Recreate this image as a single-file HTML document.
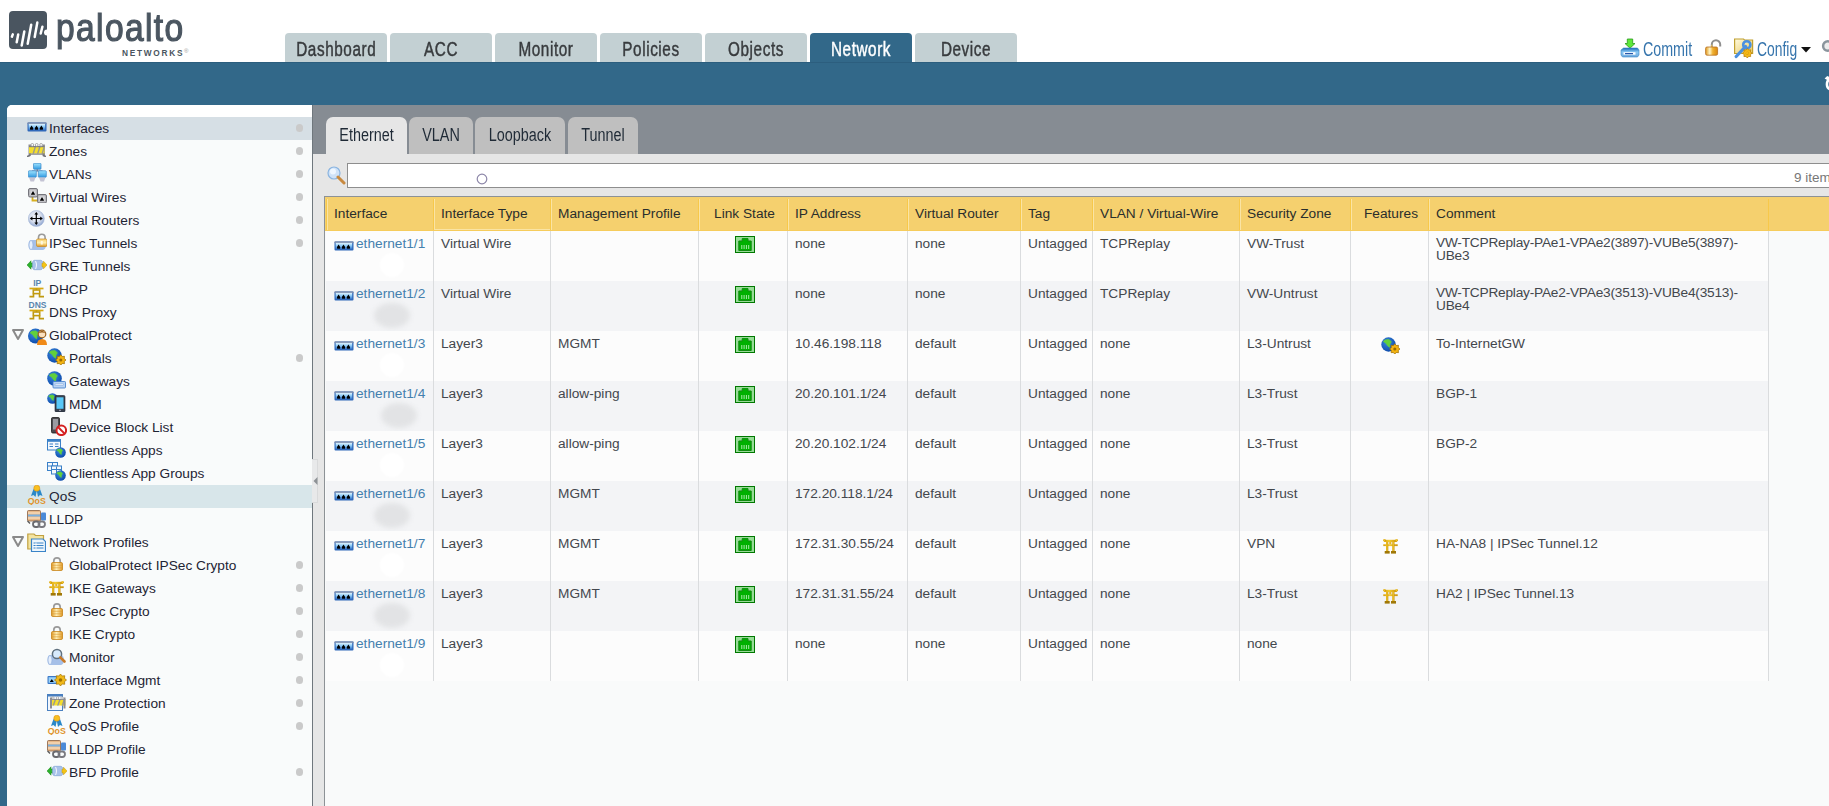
<!DOCTYPE html><html><head><meta charset="utf-8"><style>
*{box-sizing:border-box}
html,body{margin:0;padding:0}
body{width:1829px;height:806px;overflow:hidden;position:relative;background:#fff;font-family:"Liberation Sans", sans-serif;}
.a{position:absolute}
.tt{position:absolute;top:33px;width:102px;height:29px;background:#c3d0d3;border-radius:4px 4px 0 0;}
.tt span{position:absolute;left:0;right:0;top:5px;text-align:center;font-size:19.6px;color:#383b3e;transform:scaleX(0.78);white-space:nowrap;letter-spacing:0.75px;-webkit-text-stroke:0.45px currentColor}
.si{position:absolute;left:7px;width:305px;height:23px;}
.si .t{position:absolute;top:3px;font-size:13.7px;color:#1e2434;white-space:nowrap;line-height:17px}
.dot{position:absolute;left:295px;top:7px;width:9px;height:9px;border-radius:50%;background:#d5d8da}
.st{position:absolute;top:117px;height:37px;background:#bfbfbf;border-radius:7px 7px 0 0;}
.st span{position:absolute;left:0;right:0;top:8px;text-align:center;font-size:18px;color:#1f2a36;transform:scaleX(0.8);white-space:nowrap}
.hd{position:absolute;top:0;height:34px;}
.hd span{position:absolute;top:9px;font-size:13.7px;color:#2a2a2a;white-space:nowrap;line-height:17px}
.row{position:absolute;left:326px;width:1442px;height:50px;}
.c{position:absolute;top:5px;font-size:13.7px;color:#43474d;white-space:nowrap;line-height:17px}
.vl{position:absolute;top:231px;height:450px;width:1px;background:#dadcde}
</style></head><body>

<svg class="a" style="left:9px;top:11px" width="38" height="38" viewBox="0 0 38 38"><path d="M4 0 H34 A4 4 0 0 1 38 4 V18.5 A2.6 2.6 0 0 0 38 24.5 V34 A4 4 0 0 1 34 38 H4 A4 4 0 0 1 0 34 V4 A4 4 0 0 1 4 0Z" fill="#4a5560"/><g stroke="#fff" stroke-width="2.5" stroke-linecap="round"><path d="M2.9 25.7 L3.8 23.4"/><path d="M7.7 31.3 L9.2 23.5"/><path d="M12.7 34.5 L15.3 20.6"/><path d="M18.7 32.8 L22.2 13.8"/><path d="M25.7 26 L28.3 11.6"/><path d="M31.7 22.5 L33.4 15.7"/></g></svg>
<div class="a" style="left:56px;top:5px;font-size:39px;color:#4b5661;letter-spacing:1.6px;transform:scaleX(0.86);transform-origin:0 0;-webkit-text-stroke:1.2px #4b5661;line-height:46px">paloalto</div>
<div class="a" style="left:122px;top:48px;font-size:8.3px;font-weight:bold;color:#4a5560;letter-spacing:1.72px;line-height:10px">NETWORKS</div>
<div class="a" style="left:184px;top:48px;font-size:6px;color:#999;line-height:6px">&reg;</div>
<div class="tt" style="left:285px"><span>Dashboard</span></div>
<div class="tt" style="left:390px"><span>ACC</span></div>
<div class="tt" style="left:495px"><span>Monitor</span></div>
<div class="tt" style="left:600px"><span>Policies</span></div>
<div class="tt" style="left:705px"><span>Objects</span></div>
<div class="tt" style="left:810px;background:#326889"><span style="color:#fff">Network</span></div>
<div class="tt" style="left:915px"><span>Device</span></div>
<svg style="position:absolute;left:1620px;top:38px" width="20" height="20" viewBox="0 0 20 20"><defs><linearGradient id="cg1" x1="0" y1="0" x2="0" y2="1"><stop offset="0" stop-color="#1a6ab8"/><stop offset=".45" stop-color="#8ccaf5"/><stop offset="1" stop-color="#6aa6dc"/></linearGradient></defs><path d="M7.3 1 H12.7 V5.5 H15 L10 10.2 L5 5.5 H7.3Z" fill="#5ee83a" stroke="#2a9a1a" stroke-width=".8"/><path d="M3.5 10 H17.5 L19 12 V17 L17.5 19 H2.5 L1 17 V12Z" fill="url(#cg1)" stroke="#3a88c8" stroke-width=".6"/><rect x="3.5" y="14.2" width="12" height="2.5" fill="#fafcff"/><rect x="5" y="15" width="8" height="1.2" fill="#2a58a8"/></svg>
<div class="a" style="left:1643px;top:40px;font-size:19.3px;color:#3574ac;transform:scaleX(0.74);transform-origin:0 0;line-height:20px;white-space:nowrap">Commit</div>
<svg style="position:absolute;left:1705px;top:39px" width="17" height="17" viewBox="0 0 17 17"><defs><linearGradient id="lg1" x1="0" y1="0" x2="1" y2="0"><stop offset="0" stop-color="#e0961a"/><stop offset=".35" stop-color="#fff6c8"/><stop offset=".6" stop-color="#f0b030"/><stop offset="1" stop-color="#d88810"/></linearGradient></defs><path d="M6.8 8 V5.5 A4.2 4.2 0 0 1 15.2 5.5 V7.5" stroke="#8e8e8e" stroke-width="2" fill="none"/><path d="M6.8 8 V5.8" stroke="#e8c060" stroke-width="1.2"/><rect x="0.6" y="8" width="12" height="8.2" rx="1.4" fill="url(#lg1)" stroke="#b87020" stroke-width=".8"/></svg>
<svg style="position:absolute;left:1734px;top:38px" width="20" height="21" viewBox="0 0 20 21"><defs><linearGradient id="fg1" x1="0" y1="0" x2="1" y2="1"><stop offset="0" stop-color="#fffbe0"/><stop offset="1" stop-color="#e8c860"/></linearGradient></defs><path d="M0.6 1 H9.5 L10.5 2 H18.6 V15.5 H0.6Z" fill="url(#fg1)" stroke="#c0a030" stroke-width="1.2"/><path d="M2.2 18.5 L11.5 8.5" stroke="#4a90e0" stroke-width="3.2" stroke-linecap="round"/><circle cx="12.8" cy="6.8" r="3.6" fill="none" stroke="#4a90e0" stroke-width="2.6"/><polygon points="18.10,15.20 16.49,16.52 16.69,18.59 14.62,18.39 13.30,20.00 11.98,18.39 9.91,18.59 10.11,16.52 8.50,15.20 10.11,13.88 9.91,11.81 11.98,12.01 13.30,10.40 14.62,12.01 16.69,11.81 16.49,13.88" fill="#f4b818" stroke="#b07a08" stroke-width=".7"/><circle cx="13.3" cy="15.2" r="1.44" fill="#b07a08"/><circle cx="13.3" cy="15.2" r="1.4" fill="#f4b818"/></svg>
<div class="a" style="left:1757px;top:40px;font-size:19.3px;color:#3574ac;transform:scaleX(0.72);transform-origin:0 0;line-height:20px;white-space:nowrap">Config</div>
<svg style="position:absolute;left:1801px;top:47px" width="10" height="6" viewBox="0 0 10 6"><path d="M0 0 H10 L5 5.5Z" fill="#111"/></svg>
<svg style="position:absolute;left:1820px;top:39px" width="14" height="14" viewBox="0 0 14 14"><circle cx="7.8" cy="7" r="4.7" fill="#ececec" stroke="#8a959d" stroke-width="2.5"/></svg>
<div class="a" style="left:0;top:62px;width:1829px;height:43px;background:#326889;border-top:1px solid #2c5e7e"></div>
<svg style="position:absolute;left:1822px;top:74px" width="8" height="19" viewBox="0 0 8 19"><path d="M8.5 4.8 A5.6 5.8 0 0 0 8.5 15.6" stroke="#fff" stroke-width="2.6" fill="none"/><path d="M2.6 4.6 L5.2 2 L8 3 L6 6.5Z" fill="#fff"/></svg>
<div class="a" style="left:0;top:105px;width:7px;height:701px;background:#326889"></div>
<div class="a" style="left:0;top:104px;width:20px;height:10px;background:#326889"></div>
<div class="a" style="left:313px;top:105px;width:1516px;height:701px;background:#868c93"></div>
<div class="a" style="left:313px;top:154px;width:1516px;height:652px;background:#e6e6e6"></div>
<div class="a" style="left:7px;top:105px;width:305px;height:701px;background:#f9fbfb;border-top-left-radius:5px"></div>
<div class="a" style="left:312px;top:105px;width:1px;height:701px;background:#6f777d"></div>
<div class="a" style="left:7px;top:105px;width:305px;height:12px;background:#fff;border-top-left-radius:5px"></div>
<div class="si" style="top:117px;background:#d6dfe5;"></div>
<div class="a" style="left:49px;top:120px;font-size:13.7px;color:#1e2434;white-space:nowrap;line-height:17px">Interfaces</div>
<svg style="position:absolute;left:27px;top:122px" width="20" height="10" viewBox="0 0 20 10"><defs><linearGradient id="g1" x1="0" y1="0" x2="0" y2="1"><stop offset="0" stop-color="#e6f6ff"/><stop offset=".45" stop-color="#8ccaf5"/><stop offset="1" stop-color="#2f6fc8"/></linearGradient></defs><rect x="0.5" y="0.5" width="19" height="9" rx="1" fill="#3068b8"/><rect x="0.5" y="0.5" width="19" height="1.4" fill="#7c8aa8"/><rect x="1.6" y="1.8" width="16.6" height="6.4" fill="url(#g1)"/><path d="M2.8999999999999995 7 C2.8999999999999995 5.6 3.8 5 4.6 3.6 C5.3999999999999995 5 6.3 5.6 6.3 7Z" fill="#000"/><rect x="3.0999999999999996" y="6.5" width="3" height="1.2" fill="#000"/><path d="M7.8 7 C7.8 5.6 8.7 5 9.5 3.6 C10.3 5 11.2 5.6 11.2 7Z" fill="#000"/><rect x="8.0" y="6.5" width="3" height="1.2" fill="#000"/><path d="M12.700000000000001 7 C12.700000000000001 5.6 13.6 5 14.4 3.6 C15.200000000000001 5 16.1 5.6 16.1 7Z" fill="#000"/><rect x="12.9" y="6.5" width="3" height="1.2" fill="#000"/></svg>
<div class="a" style="left:296px;top:124px;width:7px;height:8px;border-radius:3.5px;background:#cacaca"></div>
<div class="si" style="top:140px;"></div>
<div class="a" style="left:49px;top:143px;font-size:13.7px;color:#1e2434;white-space:nowrap;line-height:17px">Zones</div>
<svg style="position:absolute;left:27px;top:143px" width="19" height="14" viewBox="0 0 19 14"><rect x="1.5" y="1.5" width="2.4" height="11.5" fill="#8d8d92"/><rect x="15.5" y="1.5" width="2.4" height="11.5" fill="#8d8d92"/><rect x="2" y="4" width="15.5" height="6.5" fill="#f4de2c"/><path d="M5.5 10.5 L7.5 4 H9 L7 10.5Z M10 10.5 L12 4 H13.5 L11.5 10.5Z M14.5 10.5 L16.5 4 H17.5 V5.5 L16 10.5Z" fill="#9a9a90"/><rect x="2" y="10.5" width="15.5" height="1.2" fill="#7c7c80"/><rect x="2" y="3" width="15.5" height="1.2" fill="#7c7c80"/><circle cx="5.3" cy="1.9" r="1.4" fill="#fff" stroke="#888" stroke-width=".7"/><circle cx="9.7" cy="1.9" r="1.4" fill="#fff" stroke="#888" stroke-width=".7"/><circle cx="14.1" cy="1.9" r="1.4" fill="#fff" stroke="#888" stroke-width=".7"/><path d="M0 13.5 L3 12.5 M19 13.5 L16 12.5" stroke="#6f6f74" stroke-width="1.6"/></svg>
<div class="a" style="left:296px;top:147px;width:7px;height:8px;border-radius:3.5px;background:#cacaca"></div>
<div class="si" style="top:163px;"></div>
<div class="a" style="left:49px;top:166px;font-size:13.7px;color:#1e2434;white-space:nowrap;line-height:17px">VLANs</div>
<svg style="position:absolute;left:28px;top:163px" width="19" height="19" viewBox="0 0 19 19"><defs><linearGradient id="g2" x1="0" y1="0" x2="0" y2="1"><stop offset="0" stop-color="#9fe4ff"/><stop offset="1" stop-color="#2f98e0"/></linearGradient></defs><rect x="5.5" y="0.3" width="7.5" height="6" rx=".8" fill="url(#g2)" stroke="#3a88c8" stroke-width=".7"/><path d="M9.2 6.3 V8 M4 8 H14.5 M4 8 V8.5 M14.5 8 V8.5" stroke="#4a6a90" stroke-width="1"/><rect x="0.3" y="7.8" width="8" height="6.5" rx=".8" fill="url(#g2)" stroke="#3a88c8" stroke-width=".7"/><rect x="10.3" y="7.8" width="8" height="6.5" rx=".8" fill="url(#g2)" stroke="#3a88c8" stroke-width=".7"/><path d="M1 14.5 H7.5 L6 18.5 H2.5Z M11 14.5 H17.5 L16 18.5 H12.5Z" fill="#c4c4d4"/></svg>
<div class="a" style="left:296px;top:170px;width:7px;height:8px;border-radius:3.5px;background:#cacaca"></div>
<div class="si" style="top:186px;"></div>
<div class="a" style="left:49px;top:189px;font-size:13.7px;color:#1e2434;white-space:nowrap;line-height:17px">Virtual Wires</div>
<svg style="position:absolute;left:28px;top:188px" width="19" height="15" viewBox="0 0 19 15"><path d="M4.5 9 V12.5 H10" stroke="#d8b020" stroke-width="1.8" fill="none"/><rect x="0.5" y="0.5" width="9" height="8.5" rx="1.5" fill="#b8b8bc" stroke="#6a6a70" stroke-width=".9"/><rect x="2.3" y="2.3" width="5.4" height="5" fill="#d8d8dc"/><path d="M3 6.8 C3 5.5 4 5 5 3 C6 5 7 5.5 7 6.8Z" fill="#000"/><rect x="9.5" y="6.5" width="9" height="8.5" rx="1.5" fill="#b8b8bc" stroke="#6a6a70" stroke-width=".9"/><rect x="11.3" y="8.3" width="5.4" height="5" fill="#d8d8dc"/><path d="M12 12.8 C12 11.5 13 11 14 9 C15 11 16 11.5 16 12.8Z" fill="#000"/></svg>
<div class="a" style="left:296px;top:193px;width:7px;height:8px;border-radius:3.5px;background:#cacaca"></div>
<div class="si" style="top:209px;"></div>
<div class="a" style="left:49px;top:212px;font-size:13.7px;color:#1e2434;white-space:nowrap;line-height:17px">Virtual Routers</div>
<svg style="position:absolute;left:28px;top:210px" width="17" height="17" viewBox="0 0 17 17"><defs><radialGradient id="g3" cx=".45" cy=".4" r=".6"><stop offset="0" stop-color="#f4f6fa"/><stop offset=".6" stop-color="#d4dcec"/><stop offset="1" stop-color="#8fa6d0"/></radialGradient></defs><circle cx="8.3" cy="8.5" r="8" fill="url(#g3)" stroke="#a8b8d8" stroke-width=".6"/><path d="M8.3 3.5 V13.5 M3.3 8.5 H13.3" stroke="#000" stroke-width="1.2"/><path d="M8.3 2 L6.4 4.6 H10.2Z M8.3 15 L6.4 12.4 H10.2Z M1.8 8.5 L4.4 6.6 V10.4Z M14.8 8.5 L12.2 6.6 V10.4Z" fill="#000"/></svg>
<div class="a" style="left:296px;top:216px;width:7px;height:8px;border-radius:3.5px;background:#cacaca"></div>
<div class="si" style="top:232px;"></div>
<div class="a" style="left:49px;top:235px;font-size:13.7px;color:#1e2434;white-space:nowrap;line-height:17px">IPSec Tunnels</div>
<svg style="position:absolute;left:28px;top:233px" width="19" height="18" viewBox="0 0 19 18"><defs><linearGradient id="g4" x1="0" y1="0" x2="0" y2="1"><stop offset="0" stop-color="#f8d070"/><stop offset=".5" stop-color="#fff0b0"/><stop offset="1" stop-color="#e09820"/></linearGradient></defs><path d="M3 7 H15 A3 5 0 0 1 15 17 H3 A2.5 5 0 0 1 3 7Z" fill="#a6c0e8"/><ellipse cx="3" cy="12" rx="2" ry="4.5" fill="#e4eefc" stroke="#8aa8d8" stroke-width=".6"/><path d="M10.5 7 V4.5 A3.3 3.3 0 0 1 17.1 4.5 V7" stroke="#9a9a9a" stroke-width="1.6" fill="none"/><rect x="8.5" y="6" width="10.5" height="7.5" rx="1.2" fill="url(#g4)" stroke="#c88a20" stroke-width=".7"/><rect x="12.8" y="8" width="2" height="3.5" fill="#fff8e0"/></svg>
<div class="a" style="left:296px;top:239px;width:7px;height:8px;border-radius:3.5px;background:#cacaca"></div>
<div class="si" style="top:255px;"></div>
<div class="a" style="left:49px;top:258px;font-size:13.7px;color:#1e2434;white-space:nowrap;line-height:17px">GRE Tunnels</div>
<svg style="position:absolute;left:27px;top:259px" width="20" height="12" viewBox="0 0 20 12"><path d="M0 6 L4 1.8 V4 H6.5 V8 H4 V10.2Z" fill="#2cb02c" stroke="#1a8a1a" stroke-width=".5"/><path d="M7.5 1.3 H13.5 A2.6 4.7 0 0 1 13.5 10.7 H7.5 A2.2 4.7 0 0 1 7.5 1.3Z" fill="#a8c2ea" stroke="#7a9ed0" stroke-width=".6"/><path d="M8.5 2 Q10.5 6 8.5 10" stroke="#eef4fc" stroke-width="1.1" fill="none"/><path d="M15 4.2 H16.5 V2.2 L20 6 L16.5 9.8 V7.8 H15Z" fill="#f4c414" stroke="#c89a00" stroke-width=".5"/></svg>
<div class="si" style="top:278px;"></div>
<div class="a" style="left:49px;top:281px;font-size:13.7px;color:#1e2434;white-space:nowrap;line-height:17px">DHCP</div>
<svg style="position:absolute;left:28px;top:279px" width="19" height="19" viewBox="0 0 19 19"><text x="9.3" y="7" font-family="Liberation Sans" font-weight="bold" font-size="8.6" fill="#5a86ae" text-anchor="middle">IP</text><path d="M1.5 9.5 H15.5" stroke="#d8aa10" stroke-width="1.7"/><rect x="5.3" y="11" width="6.4" height="3.6" fill="none" stroke="#c09a10" stroke-width="1.6"/><path d="M8.5 9.5 V11 M5.5 14.5 V17.5 M11.5 14.5 V17.5 M1.5 17.6 H6.3 M10.7 17.6 H16" stroke="#c09a10" stroke-width="1.6" fill="none"/></svg>
<div class="si" style="top:301px;"></div>
<div class="a" style="left:49px;top:304px;font-size:13.7px;color:#1e2434;white-space:nowrap;line-height:17px">DNS Proxy</div>
<svg style="position:absolute;left:28px;top:301px" width="19" height="19" viewBox="0 0 19 19"><text x="9.5" y="7.4" font-family="Liberation Sans" font-weight="bold" font-size="8.4" fill="#5a86ae" text-anchor="middle" textLength="18" lengthAdjust="spacingAndGlyphs">DNS</text><path d="M1.5 9.5 H15.5" stroke="#d8aa10" stroke-width="1.7"/><rect x="5.3" y="11" width="6.4" height="3.6" fill="none" stroke="#c09a10" stroke-width="1.6"/><path d="M8.5 9.5 V11 M5.5 14.5 V17.5 M11.5 14.5 V17.5 M1.5 17.6 H6.3 M10.7 17.6 H16" stroke="#c09a10" stroke-width="1.6" fill="none"/></svg>
<div class="si" style="top:324px;"></div>
<div class="a" style="left:49px;top:327px;font-size:13.7px;color:#1e2434;white-space:nowrap;line-height:17px">GlobalProtect</div>
<svg style="position:absolute;left:28px;top:326px" width="19" height="19" viewBox="0 0 19 19"><defs><radialGradient id="g5" cx=".4" cy=".35" r=".7"><stop offset="0" stop-color="#3a88e0"/><stop offset="1" stop-color="#0a48a8"/></radialGradient></defs><circle cx="7.5" cy="10" r="7.5" fill="url(#g5)"/><path d="M3.75 5.35 L7.88 4.90 L10.50 7.15 L9.00 9.40 L8.62 12.85 L6.60 11.35 L4.88 8.65 L2.10 6.85Z" fill="#62d03a" stroke="#62d03a" stroke-width="0.75" stroke-linejoin="round"/><path d="M9 19 Q9 13 14 13 Q19 13 19 19Z" fill="#f08a18"/><circle cx="14" cy="8" r="3.8" fill="#fbe0c0" stroke="#9a6020" stroke-width="1.2"/><path d="M10.3 7.5 Q14 2 17.7 7.5 Q14 5.5 10.3 7.5Z" fill="#9a6020"/></svg>
<svg style="position:absolute;left:12px;top:329px" width="12" height="11" viewBox="0 0 12 11"><path d="M1 1 H11 L6 10Z" fill="none" stroke="#8a8a8a" stroke-width="2" stroke-linejoin="round"/></svg>
<div class="si" style="top:347px;"></div>
<div class="a" style="left:69px;top:350px;font-size:13.7px;color:#1e2434;white-space:nowrap;line-height:17px">Portals</div>
<svg style="position:absolute;left:47px;top:348px" width="19" height="17" viewBox="0 0 19 17"><defs><radialGradient id="g6" cx=".4" cy=".35" r=".7"><stop offset="0" stop-color="#3a88e0"/><stop offset="1" stop-color="#0a48a8"/></radialGradient></defs><circle cx="7.5" cy="7.5" r="7.2" fill="url(#g6)"/><path d="M3.90 3.04 L7.86 2.60 L10.38 4.76 L8.94 6.92 L8.58 10.24 L6.64 8.80 L4.98 6.20 L2.32 4.48Z" fill="#62d03a" stroke="#62d03a" stroke-width="0.72" stroke-linejoin="round"/><polygon points="19.00,12.00 17.26,13.43 17.48,15.68 15.23,15.46 13.80,17.20 12.37,15.46 10.12,15.68 10.34,13.43 8.60,12.00 10.34,10.57 10.12,8.32 12.37,8.54 13.80,6.80 15.23,8.54 17.48,8.32 17.26,10.57" fill="#f4b410" stroke="#9a6a00" stroke-width=".7"/><circle cx="13.8" cy="12" r="1.56" fill="#9a6a00"/></svg>
<div class="a" style="left:296px;top:354px;width:7px;height:8px;border-radius:3.5px;background:#cacaca"></div>
<div class="si" style="top:370px;"></div>
<div class="a" style="left:69px;top:373px;font-size:13.7px;color:#1e2434;white-space:nowrap;line-height:17px">Gateways</div>
<svg style="position:absolute;left:47px;top:371px" width="19" height="18" viewBox="0 0 19 18"><defs><radialGradient id="g7" cx=".4" cy=".35" r=".7"><stop offset="0" stop-color="#3a88e0"/><stop offset="1" stop-color="#0a48a8"/></radialGradient></defs><circle cx="7.5" cy="7.5" r="7.3" fill="url(#g7)"/><path d="M3.85 2.97 L7.87 2.54 L10.42 4.73 L8.96 6.92 L8.60 10.27 L6.62 8.81 L4.95 6.19 L2.24 4.43Z" fill="#62d03a" stroke="#62d03a" stroke-width="0.73" stroke-linejoin="round"/><rect x="6" y="10.5" width="12.5" height="6.5" rx=".8" fill="#b8d4f4" stroke="#3a78c8" stroke-width=".8"/><rect x="8" y="13" width="8.5" height="1.6" fill="#fff" stroke="#6a98d8" stroke-width=".5"/></svg>
<div class="si" style="top:393px;"></div>
<div class="a" style="left:69px;top:396px;font-size:13.7px;color:#1e2434;white-space:nowrap;line-height:17px">MDM</div>
<svg style="position:absolute;left:47px;top:393px" width="19" height="19" viewBox="0 0 19 19"><defs><radialGradient id="g8" cx=".4" cy=".35" r=".7"><stop offset="0" stop-color="#3a88e0"/><stop offset="1" stop-color="#0a48a8"/></radialGradient></defs><circle cx="5.5" cy="5.5" r="5.3" fill="url(#g8)"/><path d="M2.85 2.21 L5.76 1.90 L7.62 3.49 L6.56 5.08 L6.29 7.51 L4.86 6.45 L3.65 4.55 L1.68 3.27Z" fill="#62d03a" stroke="#62d03a" stroke-width="0.53" stroke-linejoin="round"/><rect x="8" y="2.5" width="10" height="16.5" rx="1.3" fill="#38404c" stroke="#1a2030" stroke-width=".6"/><rect x="9.5" y="4.3" width="7" height="11.5" fill="#58c8f8"/><rect x="12" y="16.8" width="2" height="1" fill="#aab"/></svg>
<div class="si" style="top:416px;"></div>
<div class="a" style="left:69px;top:419px;font-size:13.7px;color:#1e2434;white-space:nowrap;line-height:17px">Device Block List</div>
<svg style="position:absolute;left:48px;top:417px" width="19" height="19" viewBox="0 0 19 19"><rect x="3.5" y="0.5" width="8" height="15.5" rx="1.3" fill="#4a4a4e" stroke="#1a1a1a" stroke-width=".8"/><rect x="5" y="2" width="5" height="10.5" fill="#9a9aa0"/><circle cx="13.3" cy="13.3" r="4.8" fill="#fff" stroke="#d42020" stroke-width="2"/><path d="M10 10 L16.6 16.6" stroke="#d42020" stroke-width="2"/></svg>
<div class="si" style="top:439px;"></div>
<div class="a" style="left:69px;top:442px;font-size:13.7px;color:#1e2434;white-space:nowrap;line-height:17px">Clientless Apps</div>
<svg style="position:absolute;left:47px;top:439px" width="19" height="19" viewBox="0 0 19 19"><rect x="0.5" y="0.5" width="13" height="10.5" fill="#f4f8fc" stroke="#3a80c8" stroke-width="1"/><rect x="0.5" y="0.5" width="13" height="2.3" fill="#3a80c8"/><path d="M2.5 5 H6 M8 5 H11.5 M2.5 7.5 H6 M8 7.5 H11.5" stroke="#3a80c8" stroke-width="1.2"/><defs><radialGradient id="g9" cx=".4" cy=".35" r=".7"><stop offset="0" stop-color="#3a88e0"/><stop offset="1" stop-color="#0a48a8"/></radialGradient></defs><circle cx="13.5" cy="13.5" r="5.3" fill="url(#g9)"/><path d="M10.85 10.21 L13.77 9.90 L15.62 11.49 L14.56 13.08 L14.29 15.51 L12.86 14.45 L11.64 12.55 L9.68 11.27Z" fill="#62d03a" stroke="#62d03a" stroke-width="0.53" stroke-linejoin="round"/></svg>
<div class="si" style="top:462px;"></div>
<div class="a" style="left:69px;top:465px;font-size:13.7px;color:#1e2434;white-space:nowrap;line-height:17px">Clientless App Groups</div>
<svg style="position:absolute;left:47px;top:462px" width="19" height="19" viewBox="0 0 19 19"><rect x="0.5" y="0.5" width="10" height="8" fill="#f4f8fc" stroke="#3a80c8" stroke-width="1"/><path d="M1 4 H10 M5.5 1 V8" stroke="#3a80c8" stroke-width="1"/><rect x="4.5" y="4" width="10" height="8" fill="#f4f8fc" stroke="#3a80c8" stroke-width="1"/><path d="M5 7.5 H14 M9.5 4.5 V12" stroke="#3a80c8" stroke-width="1"/><defs><radialGradient id="g10" cx=".4" cy=".35" r=".7"><stop offset="0" stop-color="#3a88e0"/><stop offset="1" stop-color="#0a48a8"/></radialGradient></defs><circle cx="13.5" cy="13.5" r="5.3" fill="url(#g10)"/><path d="M10.85 10.21 L13.77 9.90 L15.62 11.49 L14.56 13.08 L14.29 15.51 L12.86 14.45 L11.64 12.55 L9.68 11.27Z" fill="#62d03a" stroke="#62d03a" stroke-width="0.53" stroke-linejoin="round"/></svg>
<div class="si" style="top:485px;background:#d8e6ea;"></div>
<div class="a" style="left:49px;top:488px;font-size:13.7px;color:#1e2434;white-space:nowrap;line-height:17px">QoS</div>
<svg style="position:absolute;left:27px;top:485px" width="20" height="20" viewBox="0 0 20 20"><path d="M6.5 4 L4 11 L6.5 10 L8.5 12 L9.8 6Z M13 4 L15.5 11 L13 10 L11 12 L9.8 6Z" fill="#2a88c8"/><circle cx="9.8" cy="3.2" r="3" fill="#f8c020" stroke="#e09010" stroke-width=".6"/><text x="9.8" y="19.3" font-family="Liberation Sans" font-weight="bold" font-size="8.2" fill="#e0942a" text-anchor="middle" textLength="18" lengthAdjust="spacingAndGlyphs">QoS</text></svg>
<div class="si" style="top:508px;"></div>
<div class="a" style="left:49px;top:511px;font-size:13.7px;color:#1e2434;white-space:nowrap;line-height:17px">LLDP</div>
<svg style="position:absolute;left:27px;top:510px" width="20" height="18" viewBox="0 0 20 18"><rect x="0.5" y="0.5" width="13" height="10.5" rx="1" fill="#e8b888" stroke="#8a6040" stroke-width=".8"/><path d="M1 3 H13 M1 8 H13" stroke="#fbe8d0" stroke-width="1"/><rect x="1" y="4.5" width="12" height="2" fill="#7ab0e0"/><path d="M0.5 11 L3 13.5" stroke="#555" stroke-width="1.2"/><rect x="14" y="2.5" width="5" height="8" rx="1" fill="#4a8ad8"/><rect x="6" y="11.5" width="6.5" height="5.5" rx="2.7" fill="none" stroke="#6a6a6e" stroke-width="1.8"/><rect x="11.5" y="11.5" width="6.5" height="5.5" rx="2.7" fill="none" stroke="#7a7a80" stroke-width="1.8"/></svg>
<div class="si" style="top:531px;"></div>
<div class="a" style="left:49px;top:534px;font-size:13.7px;color:#1e2434;white-space:nowrap;line-height:17px">Network Profiles</div>
<svg style="position:absolute;left:27px;top:533px" width="19" height="19" viewBox="0 0 19 19"><path d="M0.8 1 H7 L8.5 2.5 H16.5 V16 H0.8Z" fill="#f4e4a0" stroke="#c0a040" stroke-width="1.2"/><path d="M4.5 6 H16 L18.5 8.5 V18.5 H4.5Z" fill="#eef6fc" stroke="#3a84c8" stroke-width="1.2"/><path d="M6.5 10 H16.5 M6.5 12.5 H16.5 M6.5 15 H16.5" stroke="#3a84c8" stroke-width="1"/><path d="M9 9.5 V16" stroke="#fff" stroke-width=".8"/></svg>
<svg style="position:absolute;left:12px;top:536px" width="12" height="11" viewBox="0 0 12 11"><path d="M1 1 H11 L6 10Z" fill="none" stroke="#8a8a8a" stroke-width="2" stroke-linejoin="round"/></svg>
<div class="si" style="top:554px;"></div>
<div class="a" style="left:69px;top:557px;font-size:13.7px;color:#1e2434;white-space:nowrap;line-height:17px">GlobalProtect IPSec Crypto</div>
<svg style="position:absolute;left:51px;top:556px" width="12" height="15" viewBox="0 0 12 15"><defs><linearGradient id="g11" x1="0" y1="0" x2="1" y2="0"><stop offset="0" stop-color="#e09a28"/><stop offset=".45" stop-color="#fff0b8"/><stop offset="1" stop-color="#e09a28"/></linearGradient></defs><path d="M2.8 7 V5 A3.2 3.2 0 0 1 9.2 5 V7" stroke="#9a9a9a" stroke-width="1.7" fill="none"/><rect x="0.5" y="6.5" width="11" height="8" rx="1.3" fill="url(#g11)" stroke="#c88418" stroke-width=".8"/><path d="M1 9.3 H11 M1 11.8 H11" stroke="#d89a30" stroke-width=".6"/></svg>
<div class="a" style="left:296px;top:561px;width:7px;height:8px;border-radius:3.5px;background:#cacaca"></div>
<div class="si" style="top:577px;"></div>
<div class="a" style="left:69px;top:580px;font-size:13.7px;color:#1e2434;white-space:nowrap;line-height:17px">IKE Gateways</div>
<svg style="position:absolute;left:49px;top:581px" width="15" height="15" viewBox="0 0 15 15"><defs><linearGradient id="g12" x1="0" y1="0" x2="1" y2="0"><stop offset="0" stop-color="#d8a010"/><stop offset=".4" stop-color="#f4cc30"/><stop offset="1" stop-color="#c89008"/></linearGradient></defs><g fill="url(#g12)"><rect x="1" y="0.8" width="13" height="2.2"/><circle cx="1.4" cy="1.3" r="1.3"/><circle cx="13.6" cy="1.3" r="1.3"/><rect x="0.3" y="5.3" width="14.4" height="1.8"/><rect x="3" y="2.8" width="2.3" height="9.5"/><rect x="9.2" y="2.8" width="2.3" height="9.5"/><rect x="6.3" y="2.8" width="2" height="2.6"/></g><rect x="1.7" y="12" width="5" height="2.6" fill="#a07808"/><rect x="8" y="12" width="5" height="2.6" fill="#a07808"/></svg>
<div class="a" style="left:296px;top:584px;width:7px;height:8px;border-radius:3.5px;background:#cacaca"></div>
<div class="si" style="top:600px;"></div>
<div class="a" style="left:69px;top:603px;font-size:13.7px;color:#1e2434;white-space:nowrap;line-height:17px">IPSec Crypto</div>
<svg style="position:absolute;left:51px;top:602px" width="12" height="15" viewBox="0 0 12 15"><defs><linearGradient id="g13" x1="0" y1="0" x2="1" y2="0"><stop offset="0" stop-color="#e09a28"/><stop offset=".45" stop-color="#fff0b8"/><stop offset="1" stop-color="#e09a28"/></linearGradient></defs><path d="M2.8 7 V5 A3.2 3.2 0 0 1 9.2 5 V7" stroke="#9a9a9a" stroke-width="1.7" fill="none"/><rect x="0.5" y="6.5" width="11" height="8" rx="1.3" fill="url(#g13)" stroke="#c88418" stroke-width=".8"/><path d="M1 9.3 H11 M1 11.8 H11" stroke="#d89a30" stroke-width=".6"/></svg>
<div class="a" style="left:296px;top:607px;width:7px;height:8px;border-radius:3.5px;background:#cacaca"></div>
<div class="si" style="top:623px;"></div>
<div class="a" style="left:69px;top:626px;font-size:13.7px;color:#1e2434;white-space:nowrap;line-height:17px">IKE Crypto</div>
<svg style="position:absolute;left:51px;top:625px" width="12" height="15" viewBox="0 0 12 15"><defs><linearGradient id="g14" x1="0" y1="0" x2="1" y2="0"><stop offset="0" stop-color="#e09a28"/><stop offset=".45" stop-color="#fff0b8"/><stop offset="1" stop-color="#e09a28"/></linearGradient></defs><path d="M2.8 7 V5 A3.2 3.2 0 0 1 9.2 5 V7" stroke="#9a9a9a" stroke-width="1.7" fill="none"/><rect x="0.5" y="6.5" width="11" height="8" rx="1.3" fill="url(#g14)" stroke="#c88418" stroke-width=".8"/><path d="M1 9.3 H11 M1 11.8 H11" stroke="#d89a30" stroke-width=".6"/></svg>
<div class="a" style="left:296px;top:630px;width:7px;height:8px;border-radius:3.5px;background:#cacaca"></div>
<div class="si" style="top:646px;"></div>
<div class="a" style="left:69px;top:649px;font-size:13.7px;color:#1e2434;white-space:nowrap;line-height:17px">Monitor</div>
<svg style="position:absolute;left:47px;top:648px" width="19" height="17" viewBox="0 0 19 17"><path d="M3 7 H14 A3 5 0 0 1 14 17 H3 A2.5 5 0 0 1 3 7Z" fill="#a6c0e8"/><ellipse cx="3" cy="12" rx="2" ry="4.5" fill="#e4eefc" stroke="#8aa8d8" stroke-width=".6"/><circle cx="10" cy="6" r="4.6" fill="#d8eafc" stroke="#60707e" stroke-width="1.5"/><path d="M13.3 9.3 L17.5 13.5" stroke="#c87a28" stroke-width="2.6" stroke-linecap="round"/></svg>
<div class="a" style="left:296px;top:653px;width:7px;height:8px;border-radius:3.5px;background:#cacaca"></div>
<div class="si" style="top:669px;"></div>
<div class="a" style="left:69px;top:672px;font-size:13.7px;color:#1e2434;white-space:nowrap;line-height:17px">Interface Mgmt</div>
<svg style="position:absolute;left:47px;top:672px" width="20" height="15" viewBox="0 0 20 15"><rect x="0.5" y="4" width="12" height="8" rx="1" fill="#3a78c8"/><rect x="1.6" y="5.2" width="9.8" height="5.6" fill="#9ad2f8"/><path d="M3 10 C3 9 4 8.5 4.8 7 C5.6 8.5 6.6 9 6.6 10Z" fill="#000"/><polygon points="19.50,8.00 17.49,9.65 17.74,12.24 15.15,11.99 13.50,14.00 11.85,11.99 9.26,12.24 9.51,9.65 7.50,8.00 9.51,6.35 9.26,3.76 11.85,4.01 13.50,2.00 15.15,4.01 17.74,3.76 17.49,6.35" fill="#f0b818" stroke="#a07000" stroke-width=".7"/><circle cx="13.5" cy="8" r="1.80" fill="#a07000"/></svg>
<div class="a" style="left:296px;top:676px;width:7px;height:8px;border-radius:3.5px;background:#cacaca"></div>
<div class="si" style="top:692px;"></div>
<div class="a" style="left:69px;top:695px;font-size:13.7px;color:#1e2434;white-space:nowrap;line-height:17px">Zone Protection</div>
<svg style="position:absolute;left:47px;top:694px" width="19" height="17" viewBox="0 0 19 17"><rect x="0.5" y="0.5" width="15" height="16" fill="#f2f6fb" stroke="#4a80c0" stroke-width="1"/><rect x="0.5" y="0.5" width="15" height="2" fill="#4a80c0"/><rect x="3" y="5" width="15.5" height="1" fill="#888"/><rect x="3" y="6" width="15.5" height="5.5" fill="#f4de2c"/><path d="M5.5 11.5 L7.5 6 H9 L7 11.5Z M10 11.5 L12 6 H13.5 L11.5 11.5Z M14.5 11.5 L16.5 6 H18 L16 11.5Z" fill="#9a9a90"/><rect x="3" y="3.5" width="2" height="11" fill="#8d8d92"/><rect x="16.5" y="3.5" width="2" height="11" fill="#8d8d92"/><circle cx="6" cy="4" r="1.2" fill="#fff" stroke="#888" stroke-width=".6"/><circle cx="10.5" cy="4" r="1.2" fill="#fff" stroke="#888" stroke-width=".6"/><circle cx="15" cy="4" r="1.2" fill="#fff" stroke="#888" stroke-width=".6"/></svg>
<div class="a" style="left:296px;top:699px;width:7px;height:8px;border-radius:3.5px;background:#cacaca"></div>
<div class="si" style="top:715px;"></div>
<div class="a" style="left:69px;top:718px;font-size:13.7px;color:#1e2434;white-space:nowrap;line-height:17px">QoS Profile</div>
<svg style="position:absolute;left:47px;top:715px" width="20" height="20" viewBox="0 0 20 20"><path d="M6.5 4 L4 11 L6.5 10 L8.5 12 L9.8 6Z M13 4 L15.5 11 L13 10 L11 12 L9.8 6Z" fill="#2a88c8"/><circle cx="9.8" cy="3.2" r="3" fill="#f8c020" stroke="#e09010" stroke-width=".6"/><text x="9.8" y="19.3" font-family="Liberation Sans" font-weight="bold" font-size="8.2" fill="#e0942a" text-anchor="middle" textLength="18" lengthAdjust="spacingAndGlyphs">QoS</text></svg>
<div class="a" style="left:296px;top:722px;width:7px;height:8px;border-radius:3.5px;background:#cacaca"></div>
<div class="si" style="top:738px;"></div>
<div class="a" style="left:69px;top:741px;font-size:13.7px;color:#1e2434;white-space:nowrap;line-height:17px">LLDP Profile</div>
<svg style="position:absolute;left:47px;top:740px" width="20" height="18" viewBox="0 0 20 18"><rect x="0.5" y="0.5" width="13" height="10.5" rx="1" fill="#e8b888" stroke="#8a6040" stroke-width=".8"/><path d="M1 3 H13 M1 8 H13" stroke="#fbe8d0" stroke-width="1"/><rect x="1" y="4.5" width="12" height="2" fill="#7ab0e0"/><path d="M0.5 11 L3 13.5" stroke="#555" stroke-width="1.2"/><rect x="14" y="2.5" width="5" height="8" rx="1" fill="#4a8ad8"/><rect x="6" y="11.5" width="6.5" height="5.5" rx="2.7" fill="none" stroke="#6a6a6e" stroke-width="1.8"/><rect x="11.5" y="11.5" width="6.5" height="5.5" rx="2.7" fill="none" stroke="#7a7a80" stroke-width="1.8"/></svg>
<div class="si" style="top:761px;"></div>
<div class="a" style="left:69px;top:764px;font-size:13.7px;color:#1e2434;white-space:nowrap;line-height:17px">BFD Profile</div>
<svg style="position:absolute;left:47px;top:765px" width="20" height="12" viewBox="0 0 20 12"><path d="M0 6 L4 1.8 V4 H6.5 V8 H4 V10.2Z" fill="#2cb02c" stroke="#1a8a1a" stroke-width=".5"/><path d="M7.5 1.3 H13.5 A2.6 4.7 0 0 1 13.5 10.7 H7.5 A2.2 4.7 0 0 1 7.5 1.3Z" fill="#a8c2ea" stroke="#7a9ed0" stroke-width=".6"/><path d="M8.5 2 Q10.5 6 8.5 10" stroke="#eef4fc" stroke-width="1.1" fill="none"/><path d="M15 4.2 H16.5 V2.2 L20 6 L16.5 9.8 V7.8 H15Z" fill="#f4c414" stroke="#c89a00" stroke-width=".5"/></svg>
<div class="a" style="left:296px;top:768px;width:7px;height:8px;border-radius:3.5px;background:#cacaca"></div>
<div class="a" style="left:312px;top:459px;width:6px;height:44px;background:#e8e9ea;border:1px solid #d9dadb;border-left:none"></div>
<svg style="position:absolute;left:313px;top:476px" width="5" height="10" viewBox="0 0 5 10"><path d="M4.5 1 L0.5 5 L4.5 9Z" fill="#8e9296"/></svg>
<div class="st" style="left:326px;width:81px;background:#e6e6e6"><span>Ethernet</span></div>
<div class="st" style="left:409px;width:64px;background:#bfbfbf"><span>VLAN</span></div>
<div class="st" style="left:475px;width:90px;background:#bfbfbf"><span>Loopback</span></div>
<div class="st" style="left:568px;width:70px;background:#bfbfbf"><span>Tunnel</span></div>
<svg style="position:absolute;left:327px;top:166px" width="19" height="19" viewBox="0 0 19 19"><circle cx="7" cy="7" r="6" fill="#cfe2f8" stroke="#8ab4e0" stroke-width="1.2"/><circle cx="6" cy="5.5" r="3" fill="#eef6ff"/><path d="M11 11 L17 17" stroke="#c88a40" stroke-width="3" stroke-linecap="round"/></svg>
<div class="a" style="left:347px;top:163px;width:1500px;height:25px;background:#fff;border:1px solid #8e8e8e"></div>
<svg style="position:absolute;left:476px;top:173px" width="12" height="12" viewBox="0 0 12 12"><circle cx="6" cy="6" r="4.8" fill="none" stroke="#8c86a8" stroke-width="1.2"/></svg>
<div class="a" style="left:1794px;top:169px;font-size:13.5px;color:#777;white-space:nowrap;line-height:17px">9 items</div>
<div class="a" style="left:324px;top:196px;width:1510px;height:620px;background:#f9fafa;border-left:1px solid #8d9296;border-top:1px solid #8d9296"></div>
<div class="a" style="left:325px;top:197px;width:1504px;height:34px;background:#f5d06e"></div>
<div class="a" style="left:326px;top:199px;width:1px;height:31px;background:#f7c84a"></div>
<div class="a" style="left:327px;top:199px;width:1px;height:31px;background:#fae4a4"></div>
<div class="a" style="left:334px;top:205px;font-size:13.7px;color:#2a2e2c;white-space:nowrap;line-height:17px">Interface</div>
<div class="a" style="left:433px;top:199px;width:1px;height:31px;background:#f7c84a"></div>
<div class="a" style="left:434px;top:199px;width:1px;height:31px;background:#fae4a4"></div>
<div class="a" style="left:441px;top:205px;font-size:13.7px;color:#2a2e2c;white-space:nowrap;line-height:17px">Interface Type</div>
<div class="a" style="left:550px;top:199px;width:1px;height:31px;background:#f7c84a"></div>
<div class="a" style="left:551px;top:199px;width:1px;height:31px;background:#fae4a4"></div>
<div class="a" style="left:558px;top:205px;font-size:13.7px;color:#2a2e2c;white-space:nowrap;line-height:17px">Management Profile</div>
<div class="a" style="left:698px;top:199px;width:1px;height:31px;background:#f7c84a"></div>
<div class="a" style="left:699px;top:199px;width:1px;height:31px;background:#fae4a4"></div>
<div class="a" style="left:700px;width:89px;top:205px;font-size:13.7px;color:#2a2e2c;white-space:nowrap;line-height:17px;text-align:center">Link State</div>
<div class="a" style="left:787px;top:199px;width:1px;height:31px;background:#f7c84a"></div>
<div class="a" style="left:788px;top:199px;width:1px;height:31px;background:#fae4a4"></div>
<div class="a" style="left:795px;top:205px;font-size:13.7px;color:#2a2e2c;white-space:nowrap;line-height:17px">IP Address</div>
<div class="a" style="left:907px;top:199px;width:1px;height:31px;background:#f7c84a"></div>
<div class="a" style="left:908px;top:199px;width:1px;height:31px;background:#fae4a4"></div>
<div class="a" style="left:915px;top:205px;font-size:13.7px;color:#2a2e2c;white-space:nowrap;line-height:17px">Virtual Router</div>
<div class="a" style="left:1020px;top:199px;width:1px;height:31px;background:#f7c84a"></div>
<div class="a" style="left:1021px;top:199px;width:1px;height:31px;background:#fae4a4"></div>
<div class="a" style="left:1028px;top:205px;font-size:13.7px;color:#2a2e2c;white-space:nowrap;line-height:17px">Tag</div>
<div class="a" style="left:1092px;top:199px;width:1px;height:31px;background:#f7c84a"></div>
<div class="a" style="left:1093px;top:199px;width:1px;height:31px;background:#fae4a4"></div>
<div class="a" style="left:1100px;top:205px;font-size:13.7px;color:#2a2e2c;white-space:nowrap;line-height:17px">VLAN / Virtual-Wire</div>
<div class="a" style="left:1239px;top:199px;width:1px;height:31px;background:#f7c84a"></div>
<div class="a" style="left:1240px;top:199px;width:1px;height:31px;background:#fae4a4"></div>
<div class="a" style="left:1247px;top:205px;font-size:13.7px;color:#2a2e2c;white-space:nowrap;line-height:17px">Security Zone</div>
<div class="a" style="left:1350px;top:199px;width:1px;height:31px;background:#f7c84a"></div>
<div class="a" style="left:1351px;top:199px;width:1px;height:31px;background:#fae4a4"></div>
<div class="a" style="left:1352px;width:78px;top:205px;font-size:13.7px;color:#2a2e2c;white-space:nowrap;line-height:17px;text-align:center">Features</div>
<div class="a" style="left:1428px;top:199px;width:1px;height:31px;background:#f7c84a"></div>
<div class="a" style="left:1429px;top:199px;width:1px;height:31px;background:#fae4a4"></div>
<div class="a" style="left:1436px;top:205px;font-size:13.7px;color:#2a2e2c;white-space:nowrap;line-height:17px">Comment</div>
<div class="a" style="left:434px;top:229px;width:116px;height:1px;background:#fae4a4"></div>
<div class="a" style="left:1768px;top:199px;width:1px;height:31px;background:#f7c84a"></div>
<div class="a" style="left:325px;top:230px;width:1504px;height:1px;background:#f6cc5c"></div>
<div class="a" style="left:326px;top:231px;width:1443px;height:50px;background:#fcfcfc"></div>
<div class="a" style="left:380px;top:253px;width:24px;height:24px;border-radius:50%;background:#fff;filter:blur(1.2px)"></div>
<svg style="position:absolute;left:334px;top:241px" width="20" height="10" viewBox="0 0 20 10"><defs><linearGradient id="g15" x1="0" y1="0" x2="0" y2="1"><stop offset="0" stop-color="#e6f6ff"/><stop offset=".45" stop-color="#8ccaf5"/><stop offset="1" stop-color="#2f6fc8"/></linearGradient></defs><rect x="0.5" y="0.5" width="19" height="9" rx="1" fill="#3068b8"/><rect x="0.5" y="0.5" width="19" height="1.4" fill="#7c8aa8"/><rect x="1.6" y="1.8" width="16.6" height="6.4" fill="url(#g15)"/><path d="M2.8999999999999995 7 C2.8999999999999995 5.6 3.8 5 4.6 3.6 C5.3999999999999995 5 6.3 5.6 6.3 7Z" fill="#000"/><rect x="3.0999999999999996" y="6.5" width="3" height="1.2" fill="#000"/><path d="M7.8 7 C7.8 5.6 8.7 5 9.5 3.6 C10.3 5 11.2 5.6 11.2 7Z" fill="#000"/><rect x="8.0" y="6.5" width="3" height="1.2" fill="#000"/><path d="M12.700000000000001 7 C12.700000000000001 5.6 13.6 5 14.4 3.6 C15.200000000000001 5 16.1 5.6 16.1 7Z" fill="#000"/><rect x="12.9" y="6.5" width="3" height="1.2" fill="#000"/></svg>
<div class="c" style="left:356px;top:235px;color:#4480ae">ethernet1/1</div>
<div class="c" style="left:441px;top:235px">Virtual Wire</div>
<svg style="position:absolute;left:735px;top:236px" width="20" height="17" viewBox="0 0 20 17"><rect x="0.5" y="0.5" width="19" height="16" fill="#98dc98" stroke="#007800" stroke-width="1"/><path d="M3.8 5 H7.2 V2.6 H13 V5 H16.2 V14.5 H3.8Z" fill="#00b000" stroke="#128a12" stroke-width="1"/><path d="M6.8 9 V13 M9.1 9 V13 M11.4 9 V13 M13.7 9 V13" stroke="#a8e8a8" stroke-width="1"/></svg>
<div class="c" style="left:795px;top:235px">none</div>
<div class="c" style="left:915px;top:235px">none</div>
<div class="c" style="left:1028px;top:235px">Untagged</div>
<div class="c" style="left:1100px;top:235px">TCPReplay</div>
<div class="c" style="left:1247px;top:235px">VW-Trust</div>
<div class="c" style="left:1436px;top:236px;line-height:13px;letter-spacing:-0.22px">VW-TCPReplay-PAe1-VPAe2(3897)-VUBe5(3897)-<br>UBe3</div>
<div class="a" style="left:326px;top:281px;width:1443px;height:50px;background:#f3f4f6"></div>
<div class="a" style="left:374px;top:303px;width:36px;height:25px;border-radius:50%;background:#e2e3e5;filter:blur(2.5px)"></div>
<svg style="position:absolute;left:334px;top:291px" width="20" height="10" viewBox="0 0 20 10"><defs><linearGradient id="g16" x1="0" y1="0" x2="0" y2="1"><stop offset="0" stop-color="#e6f6ff"/><stop offset=".45" stop-color="#8ccaf5"/><stop offset="1" stop-color="#2f6fc8"/></linearGradient></defs><rect x="0.5" y="0.5" width="19" height="9" rx="1" fill="#3068b8"/><rect x="0.5" y="0.5" width="19" height="1.4" fill="#7c8aa8"/><rect x="1.6" y="1.8" width="16.6" height="6.4" fill="url(#g16)"/><path d="M2.8999999999999995 7 C2.8999999999999995 5.6 3.8 5 4.6 3.6 C5.3999999999999995 5 6.3 5.6 6.3 7Z" fill="#000"/><rect x="3.0999999999999996" y="6.5" width="3" height="1.2" fill="#000"/><path d="M7.8 7 C7.8 5.6 8.7 5 9.5 3.6 C10.3 5 11.2 5.6 11.2 7Z" fill="#000"/><rect x="8.0" y="6.5" width="3" height="1.2" fill="#000"/><path d="M12.700000000000001 7 C12.700000000000001 5.6 13.6 5 14.4 3.6 C15.200000000000001 5 16.1 5.6 16.1 7Z" fill="#000"/><rect x="12.9" y="6.5" width="3" height="1.2" fill="#000"/></svg>
<div class="c" style="left:356px;top:285px;color:#4480ae">ethernet1/2</div>
<div class="c" style="left:441px;top:285px">Virtual Wire</div>
<svg style="position:absolute;left:735px;top:286px" width="20" height="17" viewBox="0 0 20 17"><rect x="0.5" y="0.5" width="19" height="16" fill="#98dc98" stroke="#007800" stroke-width="1"/><path d="M3.8 5 H7.2 V2.6 H13 V5 H16.2 V14.5 H3.8Z" fill="#00b000" stroke="#128a12" stroke-width="1"/><path d="M6.8 9 V13 M9.1 9 V13 M11.4 9 V13 M13.7 9 V13" stroke="#a8e8a8" stroke-width="1"/></svg>
<div class="c" style="left:795px;top:285px">none</div>
<div class="c" style="left:915px;top:285px">none</div>
<div class="c" style="left:1028px;top:285px">Untagged</div>
<div class="c" style="left:1100px;top:285px">TCPReplay</div>
<div class="c" style="left:1247px;top:285px">VW-Untrust</div>
<div class="c" style="left:1436px;top:286px;line-height:13px;letter-spacing:-0.22px">VW-TCPReplay-PAe2-VPAe3(3513)-VUBe4(3513)-<br>UBe4</div>
<div class="a" style="left:326px;top:331px;width:1443px;height:50px;background:#fcfcfc"></div>
<div class="a" style="left:380px;top:353px;width:24px;height:24px;border-radius:50%;background:#fff;filter:blur(1.2px)"></div>
<svg style="position:absolute;left:334px;top:341px" width="20" height="10" viewBox="0 0 20 10"><defs><linearGradient id="g17" x1="0" y1="0" x2="0" y2="1"><stop offset="0" stop-color="#e6f6ff"/><stop offset=".45" stop-color="#8ccaf5"/><stop offset="1" stop-color="#2f6fc8"/></linearGradient></defs><rect x="0.5" y="0.5" width="19" height="9" rx="1" fill="#3068b8"/><rect x="0.5" y="0.5" width="19" height="1.4" fill="#7c8aa8"/><rect x="1.6" y="1.8" width="16.6" height="6.4" fill="url(#g17)"/><path d="M2.8999999999999995 7 C2.8999999999999995 5.6 3.8 5 4.6 3.6 C5.3999999999999995 5 6.3 5.6 6.3 7Z" fill="#000"/><rect x="3.0999999999999996" y="6.5" width="3" height="1.2" fill="#000"/><path d="M7.8 7 C7.8 5.6 8.7 5 9.5 3.6 C10.3 5 11.2 5.6 11.2 7Z" fill="#000"/><rect x="8.0" y="6.5" width="3" height="1.2" fill="#000"/><path d="M12.700000000000001 7 C12.700000000000001 5.6 13.6 5 14.4 3.6 C15.200000000000001 5 16.1 5.6 16.1 7Z" fill="#000"/><rect x="12.9" y="6.5" width="3" height="1.2" fill="#000"/></svg>
<div class="c" style="left:356px;top:335px;color:#4480ae">ethernet1/3</div>
<div class="c" style="left:441px;top:335px">Layer3</div>
<div class="c" style="left:558px;top:335px">MGMT</div>
<svg style="position:absolute;left:735px;top:336px" width="20" height="17" viewBox="0 0 20 17"><rect x="0.5" y="0.5" width="19" height="16" fill="#98dc98" stroke="#007800" stroke-width="1"/><path d="M3.8 5 H7.2 V2.6 H13 V5 H16.2 V14.5 H3.8Z" fill="#00b000" stroke="#128a12" stroke-width="1"/><path d="M6.8 9 V13 M9.1 9 V13 M11.4 9 V13 M13.7 9 V13" stroke="#a8e8a8" stroke-width="1"/></svg>
<div class="c" style="left:795px;top:335px">10.46.198.118</div>
<div class="c" style="left:915px;top:335px">default</div>
<div class="c" style="left:1028px;top:335px">Untagged</div>
<div class="c" style="left:1100px;top:335px">none</div>
<div class="c" style="left:1247px;top:335px">L3-Untrust</div>
<svg style="position:absolute;left:1381px;top:337px" width="19" height="17" viewBox="0 0 19 17"><defs><radialGradient id="g18" cx=".4" cy=".35" r=".7"><stop offset="0" stop-color="#3a88e0"/><stop offset="1" stop-color="#0a48a8"/></radialGradient></defs><circle cx="7.5" cy="7.5" r="7.2" fill="url(#g18)"/><path d="M3.90 3.04 L7.86 2.60 L10.38 4.76 L8.94 6.92 L8.58 10.24 L6.64 8.80 L4.98 6.20 L2.32 4.48Z" fill="#62d03a" stroke="#62d03a" stroke-width="0.72" stroke-linejoin="round"/><polygon points="19.00,12.00 17.26,13.43 17.48,15.68 15.23,15.46 13.80,17.20 12.37,15.46 10.12,15.68 10.34,13.43 8.60,12.00 10.34,10.57 10.12,8.32 12.37,8.54 13.80,6.80 15.23,8.54 17.48,8.32 17.26,10.57" fill="#f4b410" stroke="#9a6a00" stroke-width=".7"/><circle cx="13.8" cy="12" r="1.56" fill="#9a6a00"/></svg>
<div class="c" style="left:1436px;top:335px">To-InternetGW</div>
<div class="a" style="left:326px;top:381px;width:1443px;height:50px;background:#f3f4f6"></div>
<div class="a" style="left:381px;top:403px;width:36px;height:25px;border-radius:50%;background:#e2e3e5;filter:blur(2.5px)"></div>
<svg style="position:absolute;left:334px;top:391px" width="20" height="10" viewBox="0 0 20 10"><defs><linearGradient id="g19" x1="0" y1="0" x2="0" y2="1"><stop offset="0" stop-color="#e6f6ff"/><stop offset=".45" stop-color="#8ccaf5"/><stop offset="1" stop-color="#2f6fc8"/></linearGradient></defs><rect x="0.5" y="0.5" width="19" height="9" rx="1" fill="#3068b8"/><rect x="0.5" y="0.5" width="19" height="1.4" fill="#7c8aa8"/><rect x="1.6" y="1.8" width="16.6" height="6.4" fill="url(#g19)"/><path d="M2.8999999999999995 7 C2.8999999999999995 5.6 3.8 5 4.6 3.6 C5.3999999999999995 5 6.3 5.6 6.3 7Z" fill="#000"/><rect x="3.0999999999999996" y="6.5" width="3" height="1.2" fill="#000"/><path d="M7.8 7 C7.8 5.6 8.7 5 9.5 3.6 C10.3 5 11.2 5.6 11.2 7Z" fill="#000"/><rect x="8.0" y="6.5" width="3" height="1.2" fill="#000"/><path d="M12.700000000000001 7 C12.700000000000001 5.6 13.6 5 14.4 3.6 C15.200000000000001 5 16.1 5.6 16.1 7Z" fill="#000"/><rect x="12.9" y="6.5" width="3" height="1.2" fill="#000"/></svg>
<div class="c" style="left:356px;top:385px;color:#4480ae">ethernet1/4</div>
<div class="c" style="left:441px;top:385px">Layer3</div>
<div class="c" style="left:558px;top:385px">allow-ping</div>
<svg style="position:absolute;left:735px;top:386px" width="20" height="17" viewBox="0 0 20 17"><rect x="0.5" y="0.5" width="19" height="16" fill="#98dc98" stroke="#007800" stroke-width="1"/><path d="M3.8 5 H7.2 V2.6 H13 V5 H16.2 V14.5 H3.8Z" fill="#00b000" stroke="#128a12" stroke-width="1"/><path d="M6.8 9 V13 M9.1 9 V13 M11.4 9 V13 M13.7 9 V13" stroke="#a8e8a8" stroke-width="1"/></svg>
<div class="c" style="left:795px;top:385px">20.20.101.1/24</div>
<div class="c" style="left:915px;top:385px">default</div>
<div class="c" style="left:1028px;top:385px">Untagged</div>
<div class="c" style="left:1100px;top:385px">none</div>
<div class="c" style="left:1247px;top:385px">L3-Trust</div>
<div class="c" style="left:1436px;top:385px">BGP-1</div>
<div class="a" style="left:326px;top:431px;width:1443px;height:50px;background:#fcfcfc"></div>
<div class="a" style="left:380px;top:453px;width:24px;height:24px;border-radius:50%;background:#fff;filter:blur(1.2px)"></div>
<svg style="position:absolute;left:334px;top:441px" width="20" height="10" viewBox="0 0 20 10"><defs><linearGradient id="g20" x1="0" y1="0" x2="0" y2="1"><stop offset="0" stop-color="#e6f6ff"/><stop offset=".45" stop-color="#8ccaf5"/><stop offset="1" stop-color="#2f6fc8"/></linearGradient></defs><rect x="0.5" y="0.5" width="19" height="9" rx="1" fill="#3068b8"/><rect x="0.5" y="0.5" width="19" height="1.4" fill="#7c8aa8"/><rect x="1.6" y="1.8" width="16.6" height="6.4" fill="url(#g20)"/><path d="M2.8999999999999995 7 C2.8999999999999995 5.6 3.8 5 4.6 3.6 C5.3999999999999995 5 6.3 5.6 6.3 7Z" fill="#000"/><rect x="3.0999999999999996" y="6.5" width="3" height="1.2" fill="#000"/><path d="M7.8 7 C7.8 5.6 8.7 5 9.5 3.6 C10.3 5 11.2 5.6 11.2 7Z" fill="#000"/><rect x="8.0" y="6.5" width="3" height="1.2" fill="#000"/><path d="M12.700000000000001 7 C12.700000000000001 5.6 13.6 5 14.4 3.6 C15.200000000000001 5 16.1 5.6 16.1 7Z" fill="#000"/><rect x="12.9" y="6.5" width="3" height="1.2" fill="#000"/></svg>
<div class="c" style="left:356px;top:435px;color:#4480ae">ethernet1/5</div>
<div class="c" style="left:441px;top:435px">Layer3</div>
<div class="c" style="left:558px;top:435px">allow-ping</div>
<svg style="position:absolute;left:735px;top:436px" width="20" height="17" viewBox="0 0 20 17"><rect x="0.5" y="0.5" width="19" height="16" fill="#98dc98" stroke="#007800" stroke-width="1"/><path d="M3.8 5 H7.2 V2.6 H13 V5 H16.2 V14.5 H3.8Z" fill="#00b000" stroke="#128a12" stroke-width="1"/><path d="M6.8 9 V13 M9.1 9 V13 M11.4 9 V13 M13.7 9 V13" stroke="#a8e8a8" stroke-width="1"/></svg>
<div class="c" style="left:795px;top:435px">20.20.102.1/24</div>
<div class="c" style="left:915px;top:435px">default</div>
<div class="c" style="left:1028px;top:435px">Untagged</div>
<div class="c" style="left:1100px;top:435px">none</div>
<div class="c" style="left:1247px;top:435px">L3-Trust</div>
<div class="c" style="left:1436px;top:435px">BGP-2</div>
<div class="a" style="left:326px;top:481px;width:1443px;height:50px;background:#f3f4f6"></div>
<div class="a" style="left:374px;top:503px;width:36px;height:25px;border-radius:50%;background:#e2e3e5;filter:blur(2.5px)"></div>
<svg style="position:absolute;left:334px;top:491px" width="20" height="10" viewBox="0 0 20 10"><defs><linearGradient id="g21" x1="0" y1="0" x2="0" y2="1"><stop offset="0" stop-color="#e6f6ff"/><stop offset=".45" stop-color="#8ccaf5"/><stop offset="1" stop-color="#2f6fc8"/></linearGradient></defs><rect x="0.5" y="0.5" width="19" height="9" rx="1" fill="#3068b8"/><rect x="0.5" y="0.5" width="19" height="1.4" fill="#7c8aa8"/><rect x="1.6" y="1.8" width="16.6" height="6.4" fill="url(#g21)"/><path d="M2.8999999999999995 7 C2.8999999999999995 5.6 3.8 5 4.6 3.6 C5.3999999999999995 5 6.3 5.6 6.3 7Z" fill="#000"/><rect x="3.0999999999999996" y="6.5" width="3" height="1.2" fill="#000"/><path d="M7.8 7 C7.8 5.6 8.7 5 9.5 3.6 C10.3 5 11.2 5.6 11.2 7Z" fill="#000"/><rect x="8.0" y="6.5" width="3" height="1.2" fill="#000"/><path d="M12.700000000000001 7 C12.700000000000001 5.6 13.6 5 14.4 3.6 C15.200000000000001 5 16.1 5.6 16.1 7Z" fill="#000"/><rect x="12.9" y="6.5" width="3" height="1.2" fill="#000"/></svg>
<div class="c" style="left:356px;top:485px;color:#4480ae">ethernet1/6</div>
<div class="c" style="left:441px;top:485px">Layer3</div>
<div class="c" style="left:558px;top:485px">MGMT</div>
<svg style="position:absolute;left:735px;top:486px" width="20" height="17" viewBox="0 0 20 17"><rect x="0.5" y="0.5" width="19" height="16" fill="#98dc98" stroke="#007800" stroke-width="1"/><path d="M3.8 5 H7.2 V2.6 H13 V5 H16.2 V14.5 H3.8Z" fill="#00b000" stroke="#128a12" stroke-width="1"/><path d="M6.8 9 V13 M9.1 9 V13 M11.4 9 V13 M13.7 9 V13" stroke="#a8e8a8" stroke-width="1"/></svg>
<div class="c" style="left:795px;top:485px">172.20.118.1/24</div>
<div class="c" style="left:915px;top:485px">default</div>
<div class="c" style="left:1028px;top:485px">Untagged</div>
<div class="c" style="left:1100px;top:485px">none</div>
<div class="c" style="left:1247px;top:485px">L3-Trust</div>
<div class="a" style="left:326px;top:531px;width:1443px;height:50px;background:#fcfcfc"></div>
<div class="a" style="left:380px;top:553px;width:24px;height:24px;border-radius:50%;background:#fff;filter:blur(1.2px)"></div>
<svg style="position:absolute;left:334px;top:541px" width="20" height="10" viewBox="0 0 20 10"><defs><linearGradient id="g22" x1="0" y1="0" x2="0" y2="1"><stop offset="0" stop-color="#e6f6ff"/><stop offset=".45" stop-color="#8ccaf5"/><stop offset="1" stop-color="#2f6fc8"/></linearGradient></defs><rect x="0.5" y="0.5" width="19" height="9" rx="1" fill="#3068b8"/><rect x="0.5" y="0.5" width="19" height="1.4" fill="#7c8aa8"/><rect x="1.6" y="1.8" width="16.6" height="6.4" fill="url(#g22)"/><path d="M2.8999999999999995 7 C2.8999999999999995 5.6 3.8 5 4.6 3.6 C5.3999999999999995 5 6.3 5.6 6.3 7Z" fill="#000"/><rect x="3.0999999999999996" y="6.5" width="3" height="1.2" fill="#000"/><path d="M7.8 7 C7.8 5.6 8.7 5 9.5 3.6 C10.3 5 11.2 5.6 11.2 7Z" fill="#000"/><rect x="8.0" y="6.5" width="3" height="1.2" fill="#000"/><path d="M12.700000000000001 7 C12.700000000000001 5.6 13.6 5 14.4 3.6 C15.200000000000001 5 16.1 5.6 16.1 7Z" fill="#000"/><rect x="12.9" y="6.5" width="3" height="1.2" fill="#000"/></svg>
<div class="c" style="left:356px;top:535px;color:#4480ae">ethernet1/7</div>
<div class="c" style="left:441px;top:535px">Layer3</div>
<div class="c" style="left:558px;top:535px">MGMT</div>
<svg style="position:absolute;left:735px;top:536px" width="20" height="17" viewBox="0 0 20 17"><rect x="0.5" y="0.5" width="19" height="16" fill="#98dc98" stroke="#007800" stroke-width="1"/><path d="M3.8 5 H7.2 V2.6 H13 V5 H16.2 V14.5 H3.8Z" fill="#00b000" stroke="#128a12" stroke-width="1"/><path d="M6.8 9 V13 M9.1 9 V13 M11.4 9 V13 M13.7 9 V13" stroke="#a8e8a8" stroke-width="1"/></svg>
<div class="c" style="left:795px;top:535px">172.31.30.55/24</div>
<div class="c" style="left:915px;top:535px">default</div>
<div class="c" style="left:1028px;top:535px">Untagged</div>
<div class="c" style="left:1100px;top:535px">none</div>
<div class="c" style="left:1247px;top:535px">VPN</div>
<svg style="position:absolute;left:1383px;top:539px" width="15" height="15" viewBox="0 0 15 15"><defs><linearGradient id="g23" x1="0" y1="0" x2="1" y2="0"><stop offset="0" stop-color="#d8a010"/><stop offset=".4" stop-color="#f4cc30"/><stop offset="1" stop-color="#c89008"/></linearGradient></defs><g fill="url(#g23)"><rect x="1" y="0.8" width="13" height="2.2"/><circle cx="1.4" cy="1.3" r="1.3"/><circle cx="13.6" cy="1.3" r="1.3"/><rect x="0.3" y="5.3" width="14.4" height="1.8"/><rect x="3" y="2.8" width="2.3" height="9.5"/><rect x="9.2" y="2.8" width="2.3" height="9.5"/><rect x="6.3" y="2.8" width="2" height="2.6"/></g><rect x="1.7" y="12" width="5" height="2.6" fill="#a07808"/><rect x="8" y="12" width="5" height="2.6" fill="#a07808"/></svg>
<div class="c" style="left:1436px;top:535px">HA-NA8 | IPSec Tunnel.12</div>
<div class="a" style="left:326px;top:581px;width:1443px;height:50px;background:#f3f4f6"></div>
<div class="a" style="left:374px;top:603px;width:36px;height:25px;border-radius:50%;background:#e2e3e5;filter:blur(2.5px)"></div>
<svg style="position:absolute;left:334px;top:591px" width="20" height="10" viewBox="0 0 20 10"><defs><linearGradient id="g24" x1="0" y1="0" x2="0" y2="1"><stop offset="0" stop-color="#e6f6ff"/><stop offset=".45" stop-color="#8ccaf5"/><stop offset="1" stop-color="#2f6fc8"/></linearGradient></defs><rect x="0.5" y="0.5" width="19" height="9" rx="1" fill="#3068b8"/><rect x="0.5" y="0.5" width="19" height="1.4" fill="#7c8aa8"/><rect x="1.6" y="1.8" width="16.6" height="6.4" fill="url(#g24)"/><path d="M2.8999999999999995 7 C2.8999999999999995 5.6 3.8 5 4.6 3.6 C5.3999999999999995 5 6.3 5.6 6.3 7Z" fill="#000"/><rect x="3.0999999999999996" y="6.5" width="3" height="1.2" fill="#000"/><path d="M7.8 7 C7.8 5.6 8.7 5 9.5 3.6 C10.3 5 11.2 5.6 11.2 7Z" fill="#000"/><rect x="8.0" y="6.5" width="3" height="1.2" fill="#000"/><path d="M12.700000000000001 7 C12.700000000000001 5.6 13.6 5 14.4 3.6 C15.200000000000001 5 16.1 5.6 16.1 7Z" fill="#000"/><rect x="12.9" y="6.5" width="3" height="1.2" fill="#000"/></svg>
<div class="c" style="left:356px;top:585px;color:#4480ae">ethernet1/8</div>
<div class="c" style="left:441px;top:585px">Layer3</div>
<div class="c" style="left:558px;top:585px">MGMT</div>
<svg style="position:absolute;left:735px;top:586px" width="20" height="17" viewBox="0 0 20 17"><rect x="0.5" y="0.5" width="19" height="16" fill="#98dc98" stroke="#007800" stroke-width="1"/><path d="M3.8 5 H7.2 V2.6 H13 V5 H16.2 V14.5 H3.8Z" fill="#00b000" stroke="#128a12" stroke-width="1"/><path d="M6.8 9 V13 M9.1 9 V13 M11.4 9 V13 M13.7 9 V13" stroke="#a8e8a8" stroke-width="1"/></svg>
<div class="c" style="left:795px;top:585px">172.31.31.55/24</div>
<div class="c" style="left:915px;top:585px">default</div>
<div class="c" style="left:1028px;top:585px">Untagged</div>
<div class="c" style="left:1100px;top:585px">none</div>
<div class="c" style="left:1247px;top:585px">L3-Trust</div>
<svg style="position:absolute;left:1383px;top:589px" width="15" height="15" viewBox="0 0 15 15"><defs><linearGradient id="g25" x1="0" y1="0" x2="1" y2="0"><stop offset="0" stop-color="#d8a010"/><stop offset=".4" stop-color="#f4cc30"/><stop offset="1" stop-color="#c89008"/></linearGradient></defs><g fill="url(#g25)"><rect x="1" y="0.8" width="13" height="2.2"/><circle cx="1.4" cy="1.3" r="1.3"/><circle cx="13.6" cy="1.3" r="1.3"/><rect x="0.3" y="5.3" width="14.4" height="1.8"/><rect x="3" y="2.8" width="2.3" height="9.5"/><rect x="9.2" y="2.8" width="2.3" height="9.5"/><rect x="6.3" y="2.8" width="2" height="2.6"/></g><rect x="1.7" y="12" width="5" height="2.6" fill="#a07808"/><rect x="8" y="12" width="5" height="2.6" fill="#a07808"/></svg>
<div class="c" style="left:1436px;top:585px">HA2 | IPSec Tunnel.13</div>
<div class="a" style="left:326px;top:631px;width:1443px;height:50px;background:#fcfcfc"></div>
<div class="a" style="left:380px;top:653px;width:24px;height:24px;border-radius:50%;background:#fff;filter:blur(1.2px)"></div>
<svg style="position:absolute;left:334px;top:641px" width="20" height="10" viewBox="0 0 20 10"><defs><linearGradient id="g26" x1="0" y1="0" x2="0" y2="1"><stop offset="0" stop-color="#e6f6ff"/><stop offset=".45" stop-color="#8ccaf5"/><stop offset="1" stop-color="#2f6fc8"/></linearGradient></defs><rect x="0.5" y="0.5" width="19" height="9" rx="1" fill="#3068b8"/><rect x="0.5" y="0.5" width="19" height="1.4" fill="#7c8aa8"/><rect x="1.6" y="1.8" width="16.6" height="6.4" fill="url(#g26)"/><path d="M2.8999999999999995 7 C2.8999999999999995 5.6 3.8 5 4.6 3.6 C5.3999999999999995 5 6.3 5.6 6.3 7Z" fill="#000"/><rect x="3.0999999999999996" y="6.5" width="3" height="1.2" fill="#000"/><path d="M7.8 7 C7.8 5.6 8.7 5 9.5 3.6 C10.3 5 11.2 5.6 11.2 7Z" fill="#000"/><rect x="8.0" y="6.5" width="3" height="1.2" fill="#000"/><path d="M12.700000000000001 7 C12.700000000000001 5.6 13.6 5 14.4 3.6 C15.200000000000001 5 16.1 5.6 16.1 7Z" fill="#000"/><rect x="12.9" y="6.5" width="3" height="1.2" fill="#000"/></svg>
<div class="c" style="left:356px;top:635px;color:#4480ae">ethernet1/9</div>
<div class="c" style="left:441px;top:635px">Layer3</div>
<svg style="position:absolute;left:735px;top:636px" width="20" height="17" viewBox="0 0 20 17"><rect x="0.5" y="0.5" width="19" height="16" fill="#98dc98" stroke="#007800" stroke-width="1"/><path d="M3.8 5 H7.2 V2.6 H13 V5 H16.2 V14.5 H3.8Z" fill="#00b000" stroke="#128a12" stroke-width="1"/><path d="M6.8 9 V13 M9.1 9 V13 M11.4 9 V13 M13.7 9 V13" stroke="#a8e8a8" stroke-width="1"/></svg>
<div class="c" style="left:795px;top:635px">none</div>
<div class="c" style="left:915px;top:635px">none</div>
<div class="c" style="left:1028px;top:635px">Untagged</div>
<div class="c" style="left:1100px;top:635px">none</div>
<div class="c" style="left:1247px;top:635px">none</div>
<div class="vl" style="left:433px"></div>
<div class="vl" style="left:550px"></div>
<div class="vl" style="left:698px"></div>
<div class="vl" style="left:787px"></div>
<div class="vl" style="left:907px"></div>
<div class="vl" style="left:1020px"></div>
<div class="vl" style="left:1092px"></div>
<div class="vl" style="left:1239px"></div>
<div class="vl" style="left:1350px"></div>
<div class="vl" style="left:1428px"></div>
<div class="vl" style="left:1768px"></div>
</body></html>
